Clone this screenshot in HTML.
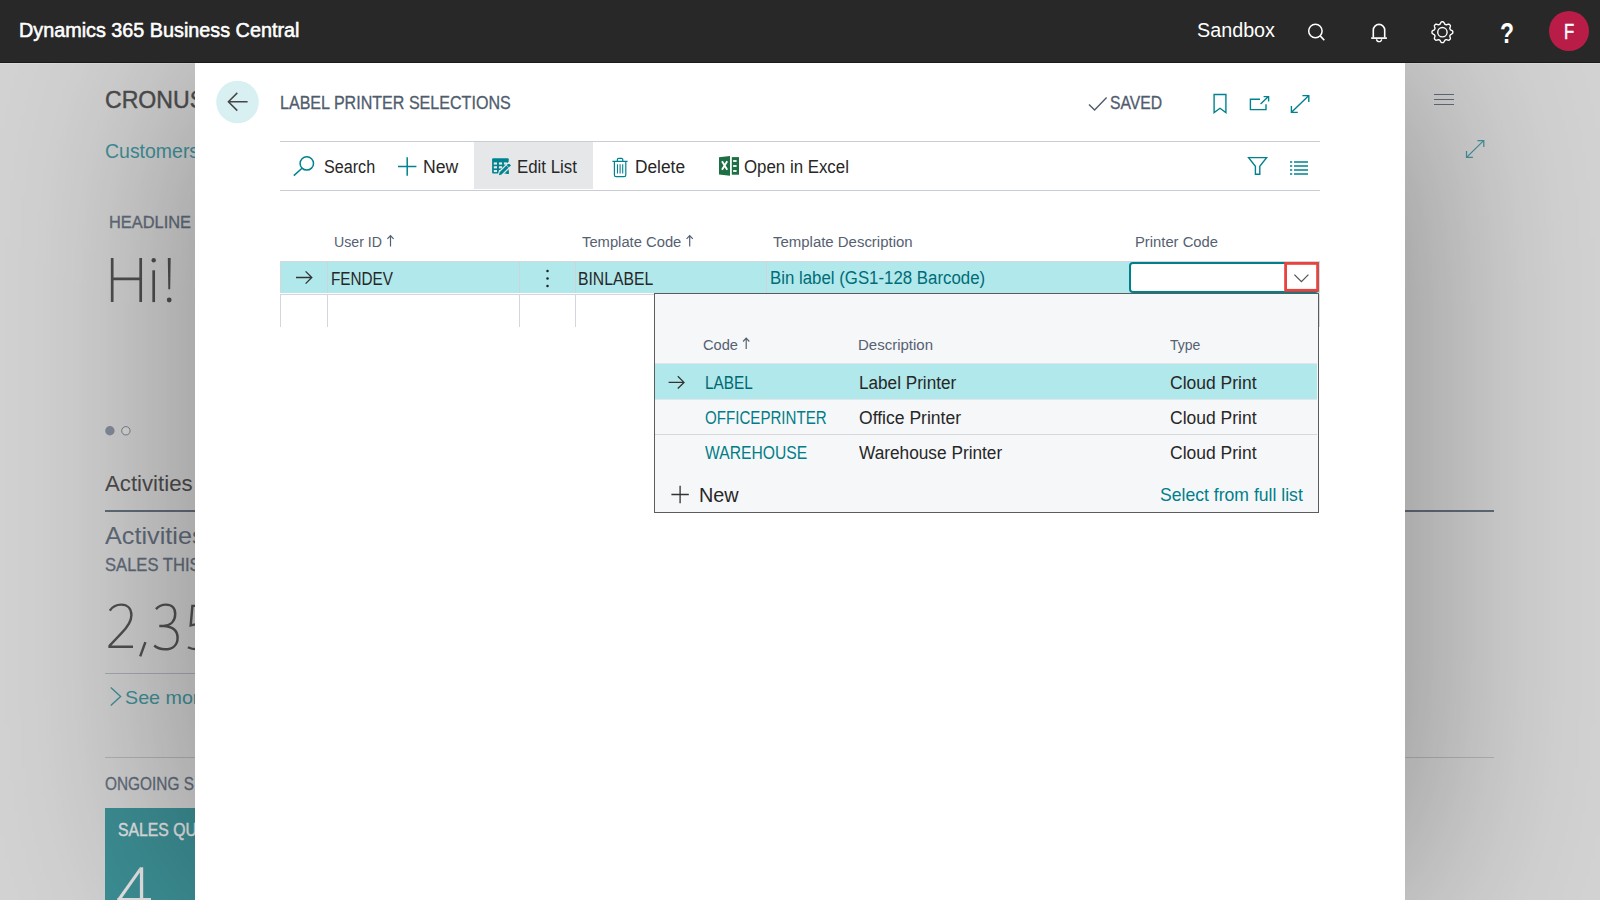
<!DOCTYPE html>
<html><head><meta charset="utf-8"><title>Label Printer Selections</title>
<style>
html,body{margin:0;padding:0;background:#fff;}
body{width:1600px;height:901px;overflow:hidden;position:relative;font-family:"Liberation Sans",sans-serif;}
.t{position:absolute;white-space:nowrap;transform-origin:0 50%;display:block;}
.abs{position:absolute;}
#top{position:absolute;left:0;top:0;width:1600px;height:62px;background:#282828;border-bottom:1px solid #1a1a1a;z-index:5;}
#page{position:absolute;left:0;top:63px;width:1600px;height:837px;overflow:hidden;background:#d4d4d4;}
#page .in{position:absolute;left:0;top:-63px;width:1600px;height:901px;}
#dlg{position:absolute;left:195px;top:0;width:1210px;height:837px;background:#fff;box-shadow:0 0 210px rgba(0,0,0,0.375);}
#dlg .clip{position:absolute;left:0;top:0;width:1210px;height:837px;overflow:hidden;}
#dlg .in{position:absolute;left:-195px;top:-63px;width:1600px;height:901px;}
svg{position:absolute;left:0;top:0;overflow:visible;}
</style></head><body>
<div id="top">
<svg width="1600" height="63" viewBox="0 0 1600 63" fill="none">
<!-- search -->
<circle cx="1315.4" cy="31" r="6.7" stroke="#fff" stroke-width="1.5"/>
<path d="M1320.2 35.9L1324.3 40.3" stroke="#fff" stroke-width="1.6"/>
<!-- bell -->
<path d="M1371.2 38.1H1386.9" stroke="#fff" stroke-width="1.7"/>
<path d="M1373.3 37.6V30.1A5.7 5.7 0 0 1 1384.7 30.1V37.6" stroke="#fff" stroke-width="1.6"/>
<path d="M1376.6 39.2A2.5 2.4 0 0 0 1381.6 39.2" stroke="#fff" stroke-width="1.4"/>
<!-- gear -->
<path d="M1452.80 32.20 L1452.79 32.61 L1452.77 33.02 L1452.51 33.40 L1452.07 33.73 L1451.57 34.02 L1451.07 34.28 L1450.60 34.51 L1450.29 34.76 L1450.19 35.07 L1450.07 35.38 L1449.94 35.67 L1449.80 35.97 L1449.83 36.36 L1450.00 36.86 L1450.17 37.39 L1450.32 37.95 L1450.40 38.50 L1450.31 38.95 L1450.04 39.26 L1449.75 39.55 L1449.46 39.84 L1449.15 40.11 L1448.70 40.20 L1448.15 40.12 L1447.59 39.97 L1447.06 39.80 L1446.56 39.63 L1446.17 39.60 L1445.87 39.74 L1445.58 39.87 L1445.27 39.99 L1444.96 40.09 L1444.71 40.40 L1444.48 40.87 L1444.22 41.37 L1443.93 41.87 L1443.60 42.31 L1443.22 42.57 L1442.81 42.59 L1442.40 42.60 L1441.99 42.59 L1441.58 42.57 L1441.20 42.31 L1440.87 41.87 L1440.58 41.37 L1440.32 40.87 L1440.09 40.40 L1439.84 40.09 L1439.53 39.99 L1439.22 39.87 L1438.93 39.74 L1438.63 39.60 L1438.24 39.63 L1437.74 39.80 L1437.21 39.97 L1436.65 40.12 L1436.10 40.20 L1435.65 40.11 L1435.34 39.84 L1435.05 39.55 L1434.76 39.26 L1434.49 38.95 L1434.40 38.50 L1434.48 37.95 L1434.63 37.39 L1434.80 36.86 L1434.97 36.36 L1435.00 35.97 L1434.86 35.67 L1434.73 35.38 L1434.61 35.07 L1434.51 34.76 L1434.20 34.51 L1433.73 34.28 L1433.23 34.02 L1432.73 33.73 L1432.29 33.40 L1432.03 33.02 L1432.01 32.61 L1432.00 32.20 L1432.01 31.79 L1432.03 31.38 L1432.29 31.00 L1432.73 30.67 L1433.23 30.38 L1433.73 30.12 L1434.20 29.89 L1434.51 29.64 L1434.61 29.33 L1434.73 29.02 L1434.86 28.73 L1435.00 28.43 L1434.97 28.04 L1434.80 27.54 L1434.63 27.01 L1434.48 26.45 L1434.40 25.90 L1434.49 25.45 L1434.76 25.14 L1435.05 24.85 L1435.34 24.56 L1435.65 24.29 L1436.10 24.20 L1436.65 24.28 L1437.21 24.43 L1437.74 24.60 L1438.24 24.77 L1438.63 24.80 L1438.93 24.66 L1439.22 24.53 L1439.53 24.41 L1439.84 24.31 L1440.09 24.00 L1440.32 23.53 L1440.58 23.03 L1440.87 22.53 L1441.20 22.09 L1441.58 21.83 L1441.99 21.81 L1442.40 21.80 L1442.81 21.81 L1443.22 21.83 L1443.60 22.09 L1443.93 22.53 L1444.22 23.03 L1444.48 23.53 L1444.71 24.00 L1444.96 24.31 L1445.27 24.41 L1445.58 24.53 L1445.87 24.66 L1446.17 24.80 L1446.56 24.77 L1447.06 24.60 L1447.59 24.43 L1448.15 24.28 L1448.70 24.20 L1449.15 24.29 L1449.46 24.56 L1449.75 24.85 L1450.04 25.14 L1450.31 25.45 L1450.40 25.90 L1450.32 26.45 L1450.17 27.01 L1450.00 27.54 L1449.83 28.04 L1449.80 28.43 L1449.94 28.73 L1450.07 29.02 L1450.19 29.33 L1450.29 29.64 L1450.60 29.89 L1451.07 30.12 L1451.57 30.38 L1452.07 30.67 L1452.51 31.00 L1452.77 31.38 L1452.79 31.79Z" stroke="#fff" stroke-width="1.4" stroke-linejoin="round"/>
<circle cx="1442.4" cy="32.2" r="4.7" stroke="#fff" stroke-width="1.4"/>
<!-- avatar -->
<circle cx="1569" cy="31" r="20" fill="#b91d47"/>
</svg>

<span id="tb1" class="t" style="left:18.60px;top:20px;font-size:20px;line-height:20px;color:#ffffff;font-weight:normal;transform:scaleX(0.9892);-webkit-text-stroke:0.55px #fff;">Dynamics 365 Business Central</span>
<span id="tb2" class="t" style="left:1197.00px;top:20px;font-size:20px;line-height:20px;color:#ffffff;font-weight:normal;transform:scaleX(0.9877);">Sandbox</span>
<span id="tb3" class="t" style="left:1500.00px;top:19px;font-size:29px;line-height:29px;color:#ffffff;font-weight:bold;transform:scaleX(0.7901);">?</span>
<span id="tb4" class="t" style="left:1563.80px;top:21px;font-size:22px;line-height:22px;color:#ffffff;font-weight:normal;transform:scaleX(0.7582);-webkit-text-stroke:0.5px #fff;">F</span>
</div>
<div id="page"><div class="in">
<div class="abs" style="left:0;top:63px;width:1600px;height:1px;background:rgba(255,255,255,0.22)"></div>
<!-- line under Activities -->
<div class="abs" style="left:105px;top:510px;width:100px;height:2px;background:#636d7c"></div>
<div class="abs" style="left:105px;top:673px;width:100px;height:1px;background:#a9adb4"></div>
<div class="abs" style="left:105px;top:757px;width:100px;height:1px;background:#b2b5b9"></div>
<!-- tile -->
<div class="abs" style="left:105px;top:808px;width:100px;height:95px;background:#3d9096"></div>
<svg width="400" height="901" viewBox="0 0 400 901" fill="none">
<!-- Hi! -->
<path d="M112.2 258.1V302.1M140.7 258.1V302.1M112.2 278.9H140.7" stroke="#505050" stroke-width="2.7"/>
<path d="M153.7 270.3V302.1" stroke="#505050" stroke-width="2.7"/>
<circle cx="153.7" cy="260.3" r="2.2" fill="#505050"/>
<path d="M167.8 258.1H170.7L170.2 289.2H168.3Z" fill="#505050"/>
<circle cx="169.2" cy="300" r="2.4" fill="#505050"/>
<!-- dots -->
<circle cx="109.9" cy="430.8" r="4.7" fill="#868e9c"/>
<circle cx="125.9" cy="430.8" r="4.2" fill="#dcdcdc" stroke="#77808d" stroke-width="1"/>
<!-- 2,35 -->
<g stroke="#525252" stroke-width="2.45" fill="none" transform="translate(0,1.1)">
<path d="M109.8 609.6C112.5 605.3 116.5 603.5 121.2 603.5C127.8 603.5 131.4 607.8 131.4 614.2C131.4 620.5 128 625.5 121.5 632L109.6 644.6V645.6H133"/>
<path d="M145.4 641L140.2 655.2"/>
<path d="M156 608C158.6 605 162 603.5 166 603.5C171.8 603.5 175.2 607 175.2 612.8C175.2 619.8 170.8 624.3 163.5 624.9H159.3M163.5 624.9C172.2 625.4 177.6 629.4 177.6 636.6C177.6 644 172.6 648.2 165 648.2C160.6 648.2 157 647 154.2 644.4"/>
<path d="M208 604.8H192.4L190.7 624.3C193 623.6 195.5 623.3 198 623.3C206 623.3 211 628 211 635.5C211 643.5 205.6 648.2 197.6 648.2C193.6 648.2 190.4 647.6 187.9 646.2"/>
</g>
<!-- chevron -->
<path d="M110.8 687.4L120.6 696.4L110.8 705.4" stroke="#41929a" stroke-width="1.4"/>
<!-- 4 -->
<path d="M139.9 867.3H143.2V901H139.9Z" fill="#e6e6e6"/>
<path d="M139.9 867.3L117 899.4H120.9L139.9 872.6Z" fill="#e6e6e6"/>
<path d="M117.4 898H151V901H117.4Z" fill="#e6e6e6"/>
</svg>

<span id="bg1" class="t" style="left:105.40px;top:88px;font-size:24.5px;line-height:24.5px;color:#4e4e4e;font-weight:normal;transform:scaleX(0.9428);-webkit-text-stroke:0.45px #4e4e4e;">CRONUS</span>
<span id="bg2" class="t" style="left:105.40px;top:142px;font-size:19.5px;line-height:19.5px;color:#41929a;font-weight:normal;transform:scaleX(0.9981);">Customers</span>
<span id="bg3" class="t" style="left:109.40px;top:214px;font-size:17.3px;line-height:17.3px;color:#636d7c;font-weight:normal;transform:scaleX(0.9487);-webkit-text-stroke:0.35px #636d7c;">HEADLINE</span>
<span id="bg4" class="t" style="left:105.20px;top:473px;font-size:22px;line-height:22px;color:#4e4e4e;font-weight:normal;transform:scaleX(1.0093);">Activities</span>
<span id="bg5" class="t" style="left:105.40px;top:524px;font-size:24.5px;line-height:24.5px;color:#636d7c;font-weight:normal;transform:scaleX(1.0303);">Activities</span>
<span id="bg6" class="t" style="left:105.40px;top:557px;font-size:17.5px;line-height:17.5px;color:#636d7c;font-weight:normal;transform:scaleX(0.9480);-webkit-text-stroke:0.3px #636d7c;">SALES THIS</span>
<span id="bg7" class="t" style="left:125.20px;top:688px;font-size:19px;line-height:19px;color:#41929a;font-weight:normal;transform:scaleX(1.0360);">See mor</span>
<span id="bg8" class="t" style="left:105.40px;top:776px;font-size:17.5px;line-height:17.5px;color:#636d7c;font-weight:normal;transform:scaleX(0.8791);-webkit-text-stroke:0.3px #636d7c;">ONGOING S</span>
<span id="bg9" class="t" style="left:117.50px;top:822px;font-size:17.5px;line-height:17.5px;color:#e6e6e6;font-weight:normal;transform:scaleX(0.9001);-webkit-text-stroke:0.4px #e6e6e6;">SALES QU</span>
<div class="abs" style="left:1400px;top:510px;width:94px;height:2px;background:#636d7c"></div>
<div class="abs" style="left:1400px;top:757px;width:94px;height:1px;background:#b2b5b9"></div>
<svg width="1600" height="901" viewBox="0 0 1600 901" fill="none">
<path d="M1434 94.5H1454M1434 99.5H1454M1434 104.5H1454" stroke="#636d7c" stroke-width="1.1"/>
<path d="M1466.6 157.4L1483.6 140.6M1477.4 140.5H1483.8V146.9M1466.5 151V157.4H1472.9" stroke="#47939a" stroke-width="1.25"/>
</svg>

</div>
<div id="dlg"><div class="clip"><div class="in">
<div class="abs" style="left:280px;top:141px;width:1040px;height:1px;background:#c9cdd4"></div>
<div class="abs" style="left:280px;top:190px;width:1040px;height:1px;background:#c9cdd4"></div>
<div class="abs" style="left:474px;top:142px;width:119px;height:47px;background:#e6e7e9"></div>
<!-- grid row 1 -->
<div class="abs" style="left:280px;top:261px;width:1040px;height:1px;background:#d3d6da"></div>
<div class="abs" style="left:280px;top:262px;width:1040px;height:31px;background:#b1e8eb"></div>
<div class="abs" style="left:280px;top:262px;width:1px;height:31px;background:#d3d6da"></div>
<div class="abs" style="left:327px;top:262px;width:1px;height:31px;background:#cdd5da"></div>
<div class="abs" style="left:519px;top:262px;width:1px;height:31px;background:#cdd5da"></div>
<div class="abs" style="left:575px;top:262px;width:1px;height:31px;background:#cdd5da"></div>
<div class="abs" style="left:766px;top:262px;width:1px;height:31px;background:#cdd5da"></div>
<!-- grid row 2 -->
<div class="abs" style="left:280px;top:294px;width:1040px;height:1px;background:#d3d6da"></div>
<div class="abs" style="left:280px;top:295px;width:1px;height:32px;background:#d3d6da"></div>
<div class="abs" style="left:327px;top:295px;width:1px;height:32px;background:#d3d6da"></div>
<div class="abs" style="left:519px;top:295px;width:1px;height:32px;background:#d3d6da"></div>
<div class="abs" style="left:575px;top:295px;width:1px;height:32px;background:#d3d6da"></div>
<div class="abs" style="left:1319px;top:294px;width:1px;height:33px;background:#d9dce1"></div>
<!-- input -->
<div class="abs" style="left:1129px;top:262px;width:190px;height:31px;box-sizing:border-box;border:2px solid #00808a;border-radius:4px;background:#fff"></div>
<div class="abs" style="left:1285px;top:263px;width:33px;height:28px;background:#fff"></div>
<!-- dropdown -->
<div class="abs" style="left:654px;top:293px;width:665px;height:220px;box-sizing:border-box;border:1px solid #5c5c5c;background:#f6f7f9"></div>
<div class="abs" style="left:655px;top:363px;width:662px;height:1px;background:#e1e4e8"></div>
<div class="abs" style="left:655px;top:364px;width:662px;height:35px;background:#b1e8eb"></div>
<div class="abs" style="left:655px;top:399px;width:662px;height:1px;background:#dfe7ea"></div>
<div class="abs" style="left:655px;top:434px;width:662px;height:1px;background:#d6d8db"></div>
<svg width="1600" height="901" viewBox="0 0 1600 901" fill="none">
<!-- back button -->
<circle cx="237.5" cy="102" r="21.3" fill="#d9f0f2"/>
<path d="M247.6 101.7H228.6M237.3 92.9L228.4 101.7L237.3 110.6" stroke="#454545" stroke-width="1.5"/>
<!-- saved check -->
<path d="M1089 104.6L1094.6 110L1106.6 97.5" stroke="#505c6d" stroke-width="1.4"/>
<!-- bookmark -->
<path d="M1214.1 94.5H1225.9V112.6L1220 108.3L1214.1 112.6Z" stroke="#00838f" stroke-width="1.4"/>
<!-- popout -->
<path d="M1260 99.2H1250.4V109.6H1266V104.2" stroke="#00838f" stroke-width="1.4"/>
<path d="M1260.6 104L1268.4 96.6M1263.6 96.6H1268.6V101.6" stroke="#00838f" stroke-width="1.4"/>
<!-- expand -->
<path d="M1291.5 112.3L1308.6 95.7M1302.4 95.6H1308.8V102M1291.4 106V112.4H1297.8" stroke="#00838f" stroke-width="1.4"/>
<!-- filter -->
<path d="M1248.6 157.6H1266.6L1259.8 166.2V174.3H1255.4V166.2Z" stroke="#00838f" stroke-width="1.4" stroke-linejoin="miter"/>
<!-- list icon -->
<path d="M1294 162H1308M1294 166H1308M1294 170H1308M1294 174H1308" stroke="#00838f" stroke-width="1.3"/>
<path d="M1290 162H1292.2M1290 166H1292.2M1290 170H1292.2M1290 174H1292.2" stroke="#00838f" stroke-width="1.3"/>
<!-- toolbar: search -->
<circle cx="306.8" cy="163.4" r="6.7" stroke="#00838f" stroke-width="1.5"/>
<path d="M302 168.3L293.8 175.6" stroke="#00838f" stroke-width="1.5"/>
<!-- toolbar: plus -->
<path d="M398 166.5H416.4M407.2 157.3V175.7" stroke="#00838f" stroke-width="1.5"/>
<!-- toolbar: edit list -->
<rect x="492.1" y="158.2" width="16.6" height="15.4" rx="1" fill="#00838f"/>
<g fill="#e6e7e9">
<rect x="493.8" y="162.4" width="3.2" height="2.2"/><rect x="498.9" y="162.4" width="3.2" height="2.2"/><rect x="503.9" y="162.4" width="3.2" height="2.2"/>
<rect x="493.8" y="166.2" width="3.2" height="2.2"/><rect x="498.9" y="166.2" width="3.2" height="2.2"/>
<rect x="493.8" y="170" width="3.2" height="2.1"/><rect x="498.9" y="170" width="3.2" height="2.1"/>
</g>
<path d="M497.9 176.2L499.2 171.8L508.8 162.4L511.8 165.4L502.2 174.8Z" fill="#00838f" stroke="#e6e7e9" stroke-width="1.2" stroke-linejoin="round"/>
<path d="M506.2 165L509 167.9" stroke="#e6e7e9" stroke-width="0.7"/>
<path d="M505.8 173.9H508.9V170.9Z" fill="#00838f"/>
<!-- toolbar: trash -->
<path d="M612.4 161.4H627.6M617.4 161.2V159.6Q617.4 158.4 618.6 158.4H621.6Q622.8 158.4 622.8 159.6V161.2" stroke="#00838f" stroke-width="1.2"/>
<path d="M614.4 161.6V175Q614.4 176.6 616 176.6H624.2Q625.8 176.6 625.8 175V161.6" stroke="#00838f" stroke-width="1.2"/>
<path d="M617.5 164.3V173.6M620.1 164.3V173.6M622.7 164.3V173.6" stroke="#00838f" stroke-width="1.1"/>
<!-- toolbar: excel -->
<path d="M719 157.3L730 156V175.8L719 174.5Z" fill="#1d7044"/>
<rect x="731.8" y="157.1" width="7.2" height="17.6" fill="#1d7044"/>
<g fill="#fff"><rect x="733.1" y="160.1" width="3.5" height="1.8"/><rect x="733.1" y="165.1" width="3.5" height="1.8"/><rect x="733.1" y="170.1" width="3.5" height="1.8"/></g>
<path d="M722 161.2L727.2 169.8M727.2 161.2L722 169.8" stroke="#fff" stroke-width="1.9"/>
<!-- header sort arrows -->
<path d="M390.5 246.4V235.8M387.4 238.9L390.5 235.6L393.6 238.9" stroke="#556171" stroke-width="1.2"/>
<path d="M689.7 246.4V235.8M686.6 238.9L689.7 235.6L692.8 238.9" stroke="#556171" stroke-width="1.2"/>
<path d="M746.2 349V338.4M743.1 341.5L746.2 338.2L749.3 341.5" stroke="#556171" stroke-width="1.2"/>
<!-- row arrow -->
<path d="M296 277.5H311.6M305.6 271.4L311.8 277.5L305.6 283.6" stroke="#333" stroke-width="1.3"/>
<!-- row dots -->
<circle cx="547.5" cy="271" r="1.25" fill="#222"/><circle cx="547.5" cy="278.5" r="1.25" fill="#222"/><circle cx="547.5" cy="286" r="1.25" fill="#222"/>
<rect x="1285.6" y="263.4" width="32" height="26.9" stroke="#e8433f" stroke-width="2.8"/>
<!-- chevron -->
<path d="M1294.4 274.6L1301.4 281.6L1308.4 274.6" stroke="#555" stroke-width="1.3"/>
<!-- dropdown row arrow -->
<path d="M668.6 382.4H683.8M677.8 376.3L684 382.4L677.8 388.5" stroke="#333" stroke-width="1.3"/>
<!-- dropdown plus -->
<path d="M671.4 494.5H688.8M680.1 485.8V503.2" stroke="#333" stroke-width="1.3"/>
</svg>

<span id="d1" class="t" style="left:280.30px;top:95px;font-size:17.5px;line-height:17.5px;color:#505c6d;font-weight:normal;transform:scaleX(0.9183);-webkit-text-stroke:0.3px #505c6d;">LABEL PRINTER SELECTIONS</span>
<span id="d2" class="t" style="left:1109.80px;top:95px;font-size:17.5px;line-height:17.5px;color:#505c6d;font-weight:normal;transform:scaleX(0.8995);-webkit-text-stroke:0.3px #505c6d;">SAVED</span>
<span id="d3" class="t" style="left:323.80px;top:158px;font-size:18px;line-height:18px;color:#272727;font-weight:normal;transform:scaleX(0.8975);">Search</span>
<span id="d4" class="t" style="left:422.80px;top:158px;font-size:18px;line-height:18px;color:#272727;font-weight:normal;transform:scaleX(0.9774);">New</span>
<span id="d5" class="t" style="left:516.60px;top:158px;font-size:18px;line-height:18px;color:#272727;font-weight:normal;transform:scaleX(0.9355);">Edit List</span>
<span id="d6" class="t" style="left:635.00px;top:158px;font-size:18px;line-height:18px;color:#272727;font-weight:normal;transform:scaleX(0.9610);">Delete</span>
<span id="d7" class="t" style="left:743.60px;top:158px;font-size:18px;line-height:18px;color:#272727;font-weight:normal;transform:scaleX(0.9361);">Open in Excel</span>
<span id="h1" class="t" style="left:334.30px;top:234px;font-size:15.3px;line-height:15.3px;color:#556171;font-weight:normal;transform:scaleX(0.9259);">User ID</span>
<span id="h2" class="t" style="left:582.00px;top:234px;font-size:15.3px;line-height:15.3px;color:#556171;font-weight:normal;transform:scaleX(0.9651);">Template Code</span>
<span id="h3" class="t" style="left:773.20px;top:234px;font-size:15.3px;line-height:15.3px;color:#556171;font-weight:normal;transform:scaleX(0.9773);">Template Description</span>
<span id="h4" class="t" style="left:1135.00px;top:234px;font-size:15.3px;line-height:15.3px;color:#556171;font-weight:normal;transform:scaleX(0.9665);">Printer Code</span>
<span id="r1" class="t" style="left:331.00px;top:270px;font-size:18px;line-height:18px;color:#272727;font-weight:normal;transform:scaleX(0.8491);">FENDEV</span>
<span id="r2" class="t" style="left:578.40px;top:270px;font-size:18px;line-height:18px;color:#272727;font-weight:normal;transform:scaleX(0.8739);">BINLABEL</span>
<span id="r3" class="t" style="left:769.50px;top:269px;font-size:18px;line-height:18px;color:#006c77;font-weight:normal;transform:scaleX(0.9347);">Bin label (GS1-128 Barcode)</span>
<span id="p1" class="t" style="left:703.00px;top:337px;font-size:15.3px;line-height:15.3px;color:#556171;font-weight:normal;transform:scaleX(0.9569);">Code</span>
<span id="p2" class="t" style="left:858.40px;top:337px;font-size:15.3px;line-height:15.3px;color:#556171;font-weight:normal;transform:scaleX(0.9802);">Description</span>
<span id="p3" class="t" style="left:1169.60px;top:337px;font-size:15.3px;line-height:15.3px;color:#556171;font-weight:normal;transform:scaleX(0.9164);">Type</span>
<span id="p4" class="t" style="left:704.60px;top:374px;font-size:18px;line-height:18px;color:#006873;font-weight:normal;transform:scaleX(0.8529);">LABEL</span>
<span id="p5" class="t" style="left:859.20px;top:374px;font-size:18px;line-height:18px;color:#272727;font-weight:normal;transform:scaleX(0.9524);">Label Printer</span>
<span id="p6" class="t" style="left:1170.30px;top:374px;font-size:18px;line-height:18px;color:#272727;font-weight:normal;transform:scaleX(0.9714);">Cloud Print</span>
<span id="p7" class="t" style="left:704.60px;top:409px;font-size:18px;line-height:18px;color:#007d88;font-weight:normal;transform:scaleX(0.8392);">OFFICEPRINTER</span>
<span id="p8" class="t" style="left:859.20px;top:409px;font-size:18px;line-height:18px;color:#272727;font-weight:normal;transform:scaleX(0.9750);">Office Printer</span>
<span id="p9" class="t" style="left:1170.30px;top:409px;font-size:18px;line-height:18px;color:#272727;font-weight:normal;transform:scaleX(0.9714);">Cloud Print</span>
<span id="p10" class="t" style="left:704.60px;top:444px;font-size:18px;line-height:18px;color:#007d88;font-weight:normal;transform:scaleX(0.8709);">WAREHOUSE</span>
<span id="p11" class="t" style="left:859.20px;top:444px;font-size:18px;line-height:18px;color:#272727;font-weight:normal;transform:scaleX(0.9585);">Warehouse Printer</span>
<span id="p12" class="t" style="left:1170.30px;top:444px;font-size:18px;line-height:18px;color:#272727;font-weight:normal;transform:scaleX(0.9714);">Cloud Print</span>
<span id="p13" class="t" style="left:699.30px;top:486px;font-size:19.5px;line-height:19.5px;color:#272727;font-weight:normal;transform:scaleX(1.0175);">New</span>
<span id="p14" class="t" style="left:1159.80px;top:486px;font-size:18.5px;line-height:18.5px;color:#007f8b;font-weight:normal;transform:scaleX(0.9513);">Select from full list</span>
</div></div></div>
</div>
</body></html>
